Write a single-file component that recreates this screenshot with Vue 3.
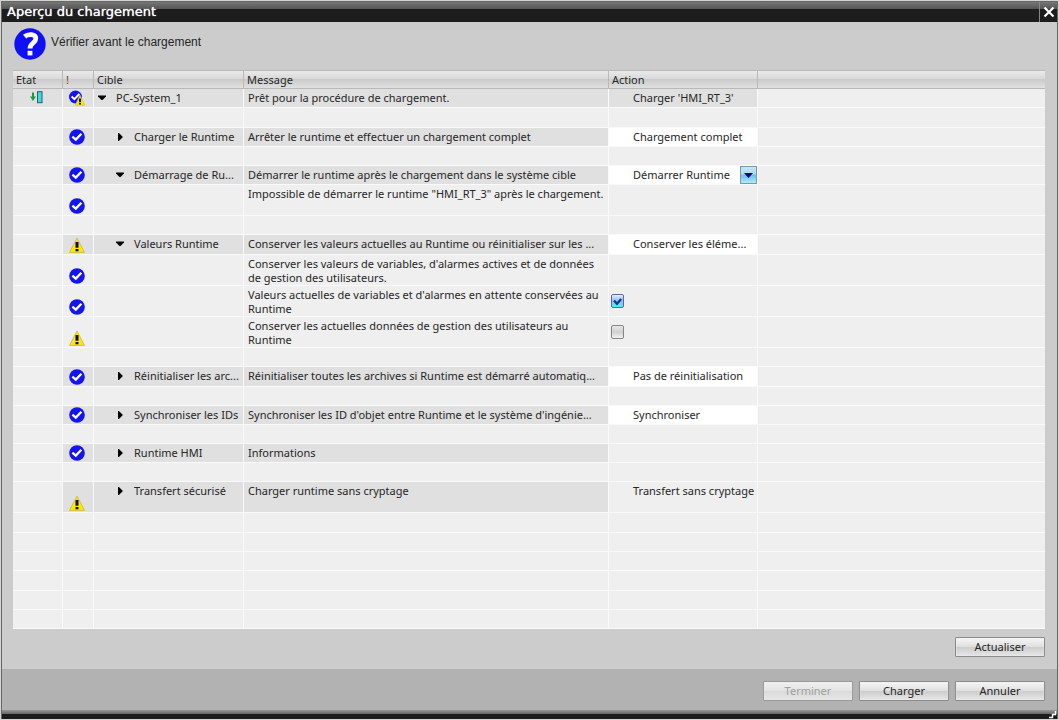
<script setup>
const rows = [
  { h: 'short', kind: 'root', state: true, icon: 'mixed', arrow: 'down', target: 'PC-System_1', msg: 'Prêt pour la procédure de chargement.', action: "Charger 'HMI_RT_3'" },
  { h: 'medium' },
  { h: 'short', kind: 'group', icon: 'ok', arrow: 'right', target: 'Charger le Runtime', msg: 'Arrêter le runtime et effectuer un chargement complet', choice: 'Chargement complet' },
  { h: 'short' },
  { h: 'short', kind: 'group', icon: 'ok', arrow: 'down', target: 'Démarrage de Ru...', msg: 'Démarrer le runtime après le chargement dans le système cible', choice: 'Démarrer Runtime', open: true },
  { h: 'tall', icon: 'ok', msg: 'Impossible de démarrer le runtime "HMI_RT_3" après le chargement.' },
  { h: 'short' },
  { h: 'medium', kind: 'group', icon: 'warn', arrow: 'down', target: 'Valeurs Runtime', msg: 'Conserver les valeurs actuelles au Runtime ou réinitialiser sur les ...', choice: 'Conserver les éléme...' },
  { h: 'tall', icon: 'ok', msg: "Conserver les valeurs de variables, d'alarmes actives et de données\nde gestion des utilisateurs." },
  { h: 'tall', icon: 'ok', msg: "Valeurs actuelles de variables et d'alarmes en attente conservées au\nRuntime", check: true, checked: true },
  { h: 'tall', icon: 'warn', msg: 'Conserver les actuelles données de gestion des utilisateurs au\nRuntime', check: true, checked: false },
  { h: 'short' },
  { h: 'medium', kind: 'group', icon: 'ok', arrow: 'right', target: 'Réinitialiser les arc...', msg: 'Réinitialiser toutes les archives si Runtime est démarré automatiq...', choice: 'Pas de réinitialisation' },
  { h: 'short' },
  { h: 'short', kind: 'group', icon: 'ok', arrow: 'right', target: 'Synchroniser les IDs', msg: "Synchroniser les ID d'objet entre Runtime et le système d'ingénie...", choice: 'Synchroniser' },
  { h: 'short' },
  { h: 'short', kind: 'group', icon: 'ok', arrow: 'right', target: 'Runtime HMI', msg: 'Informations' },
  { h: 'short' },
  { h: 'tall', kind: 'group', icon: 'warn', arrow: 'right', target: 'Transfert sécurisé', msg: 'Charger runtime sans cryptage', action: 'Transfert sans cryptage' },
  { h: 'medium' },
  { h: 'short' },
  { h: 'short' },
  { h: 'medium' },
  { h: 'short' },
  { h: 'short' },
]
</script>

<template>
  <div class="window">
    <header class="titlebar">
      <h1>Aperçu du chargement</h1>
      <button class="close" type="button" aria-label="Fermer">
        <svg width="12" height="12" viewBox="0 0 12 12"><path d="M1.5 1.5 10.5 10.5M10.5 1.5 1.5 10.5" stroke="#fff" stroke-width="2.2" fill="none" /></svg>
      </button>
    </header>

    <main class="content">
      <div class="intro">
        <svg class="question" width="32" height="32" viewBox="0 0 32 32">
          <circle cx="16" cy="16" r="15.7" fill="#1010f4" />
          <path d="M10.6 8.6C14 5.6 21.8 5.6 21.8 10.6C21.8 15 16 15.2 16 20.4" fill="none" stroke="#fff" stroke-width="4.8" />
          <rect x="13.6" y="22.8" width="4.8" height="4.6" fill="#fff" />
        </svg>
        <p>Vérifier avant le chargement</p>
      </div>

      <table class="grid">
        <colgroup>
          <col class="c-state" /><col class="c-flag" /><col class="c-target" /><col class="c-msg" /><col class="c-action" /><col />
        </colgroup>
        <thead>
          <tr><th>Etat</th><th class="bang">!</th><th>Cible</th><th>Message</th><th>Action</th><th></th></tr>
        </thead>
        <tbody>
          <tr v-for="(r, i) in rows" :key="i" :class="[r.h, r.kind]">
            <td class="state">
              <svg v-if="r.state" width="13" height="13" viewBox="0 0 13 13">
                <path d="M3 1.5V8" stroke="#1d9a3c" stroke-width="2" />
                <path d="M0 5.6H6L3 10Z" fill="#1d9a3c" />
                <rect x="7.5" y="0.7" width="4.5" height="11" fill="#3fd9e4" stroke="#315a68" />
              </svg>
            </td>
            <td class="flag">
              <svg v-if="r.icon" width="16" height="16" viewBox="0 0 16 16">
                <template v-if="r.icon === 'ok'">
                  <circle cx="8" cy="8" r="7.8" fill="#1414f0" />
                  <path d="M3.4 7.6 6.8 10.6 12.4 4.8" fill="none" stroke="#fff" stroke-width="2.3" />
                </template>
                <template v-else-if="r.icon === 'warn'">
                  <path d="M8 1 15.5 15.4H0.5Z" fill="#f8e713" stroke="#cfb92b" stroke-width="0.8" stroke-linejoin="round" />
                  <path d="M8 5V10.7M8 12V14.2" stroke="#10103a" stroke-width="3" />
                </template>
                <template v-else>
                  <circle cx="6.5" cy="7" r="6.5" fill="#1414f0" />
                  <path d="M2.6 6.6 5.4 9.2 10.4 4" fill="none" stroke="#fff" stroke-width="2" />
                  <path d="M11 5 15.7 15.3H6.2Z" fill="#f8e713" stroke="#cfb92b" stroke-width="0.6" />
                  <path d="M11 8.4V11.9M11 12.8V14.4" stroke="#10103a" stroke-width="2" />
                </template>
              </svg>
            </td>
            <td class="target">
              <div v-if="r.target" class="node">
                <button type="button" class="toggle" :aria-label="r.target" :aria-expanded="r.arrow === 'down'">
                  <svg width="8" height="10" viewBox="0 0 8 10">
                    <path v-if="r.arrow === 'down'" d="M0 2.6H8V3.4L4.5 7H3.5L0 3.4Z" fill="#000" />
                    <path v-else d="M2 1H3L6.4 4.5V5.5L3 9H2Z" fill="#000" />
                  </svg>
                </button>
                <span>{{ r.target }}</span>
              </div>
            </td>
            <td class="msg">{{ r.msg }}</td>
            <td class="action" :class="{ editable: r.choice, 'with-check': r.check }">
              <span v-if="r.action" class="label">{{ r.action }}</span>
              <select v-if="r.choice" :aria-label="r.msg">
                <option>{{ r.choice }}</option>
              </select>
              <span v-if="r.open" class="drop">
                <svg width="9" height="5" viewBox="0 0 9 5"><path d="M0 0H9L4.5 5Z" fill="#000090" /></svg>
              </span>
              <input v-if="r.check" type="checkbox" :checked="r.checked" :aria-label="r.msg" />
              <svg v-if="r.checked" class="tick" width="9" height="9" viewBox="0 0 9 9"><path d="M1 3.5 4 6.8 8.2 2" fill="none" stroke="#10388c" stroke-width="2.2" /></svg>
            </td>
            <td></td>
          </tr>
        </tbody>
      </table>

      <div class="refresh"><button class="btn" type="button">Actualiser</button></div>
    </main>

    <footer class="footer">
      <button class="btn" type="button" disabled>Terminer</button>
      <button class="btn" type="button">Charger</button>
      <button class="btn" type="button">Annuler</button>
    </footer>
    <div class="base">
      <svg width="8" height="8" viewBox="0 0 8 8"><path d="M6.5 0V3.5H3.5V6.5H0" fill="none" stroke="#fff" stroke-width="1.4" /></svg>
    </div>
  </div>
</template>

<style>
body { background: #d3d6d3; }
</style>

<style scoped>
.window {
  box-sizing: border-box;
  min-height: calc(100vh - 2px);
  margin: 1px;
  display: flex;
  flex-direction: column;
  border: 1px solid #666;
  border-bottom: 0;
  background: #ccc;
  color: #262626;
  font: 11px/14px "Noto Sans", "Open Sans", sans-serif;
}
button, select, input { font: inherit; color: inherit; margin: 0; }
.titlebar {
  display: flex;
  justify-content: space-between;
  height: 20px;
  background: linear-gradient(#777 0, #555 7px, #1d1d1d 7px);
}
.titlebar h1 {
  margin: 0;
  padding-left: 5px;
  color: #fff;
  font: 400 13px/19px "DejaVu Sans", sans-serif;
  text-shadow: 0 0 1px #fff;
}
.close {
  width: 18px;
  padding: 0;
  display: grid;
  place-items: center;
  border: 0;
  border-left: 1px solid #888;
  background: transparent;
}
.content { flex: 1; padding: 0 12px 12px 11px; }
.intro { display: flex; height: 48px; padding-left: 1px; }
.question { margin-top: 6px; }
.intro p { margin: 13px 0 0 5px; font: 12px/14px "Liberation Sans", Arial, sans-serif; }

.grid { width: 100%; table-layout: fixed; border-collapse: separate; border-spacing: 0; background: #efefef; }
.c-state { width: 50px; }
.c-flag { width: 31px; }
.c-target { width: 150px; }
.c-msg { width: 365px; }
.c-action { width: 149px; }
th {
  box-sizing: border-box;
  height: 19px;
  padding: 0 3px;
  border: solid #b9b9b9;
  border-width: 1px 1px 1px 0;
  background: linear-gradient(#eaeaea, #d8d8d8 49%, #cbcbcb 50%, #e0e0e0);
  font-weight: 400;
  text-align: left;
}
th.bang { color: #704038; }
th:last-child { border-right: 0; }
td {
  box-sizing: border-box;
  padding: 0;
  border: solid #fafafa;
  border-width: 0 1px 1px 0;
  vertical-align: top;
}
td:last-child { border-right: 0; }
.short td { height: 19px; }
.medium td { height: 20px; }
.tall td { height: 31px; }
.root td:not(:last-child), .group .flag, .group .target, .group .msg { background: #e0e0e0; }
.state { padding: 2px 0 0 17px; }
.flag { vertical-align: bottom; }
td svg { display: block; }
.flag svg { margin: 0 6px 1px; }
.node { display: flex; align-items: center; padding: 2px 0 0 22px; white-space: nowrap; }
.root .node { padding-left: 4px; }
.toggle { display: block; padding: 0; border: 0; margin-right: 10px; background: transparent; }
.msg { padding: 2px 0 0 4px; white-space: pre; }
.action { position: relative; white-space: nowrap; }
.label { display: block; padding: 2px 0 0 24px; }
td.editable { background: #fff; }
select {
  display: block;
  width: 100%;
  height: 18px;
  padding: 0 0 0 24px;
  border: 0;
  border-radius: 0;
  appearance: none;
  background: transparent;
}
.drop {
  box-sizing: border-box;
  position: absolute;
  right: 0;
  top: 0;
  width: 17px;
  height: 18px;
  display: grid;
  place-items: center;
  border: 1px solid #7f96a4;
  background: linear-gradient(#c4e6fa, #a8dbf6 45%, #66bdec 50%, #b0ecfc);
  pointer-events: none;
}
td.with-check { vertical-align: middle; padding-left: 2px; }
input {
  display: block;
  box-sizing: border-box;
  width: 13px;
  height: 14px;
  border: 1px solid #858585;
  border-radius: 2px;
  appearance: none;
  background: linear-gradient(#e8e8e8, #d0d0d0 50%, #f2f2f2);
}
input:checked { border-color: #5c6a90; background: linear-gradient(#e4ecff, #8cc0f0 50%, #50f0f8); }
.tick { position: absolute; left: 4px; top: 11px; pointer-events: none; }

.refresh { display: flex; justify-content: flex-end; padding-top: 8px; }
.btn {
  box-sizing: border-box;
  width: 90px;
  height: 20px;
  padding: 0;
  border: 1px solid #8c8c8c;
  border-radius: 1px;
  background: linear-gradient(#f6f6f6, #e0e0e0 47%, #cccccc 50%, #e6e6e6);
  box-shadow: inset 0 0 0 1px #ececec55;
}
.btn:disabled { color: #a0a0a0; border-color: #999; background: linear-gradient(#f0f0f0, #e4e4e4 47%, #dadada 50%, #e6e6e6); }
.footer {
  display: flex;
  justify-content: flex-end;
  gap: 6px;
  padding: 12px 12px 9px;
  background: #b2b2b2;
}
.base {
  display: flex;
  justify-content: flex-end;
  height: 9px;
  align-items: flex-end;
  background: linear-gradient(#999 0, #666 4px, #1d1d1d 4px);
}
.base svg { display: block; }
</style>
